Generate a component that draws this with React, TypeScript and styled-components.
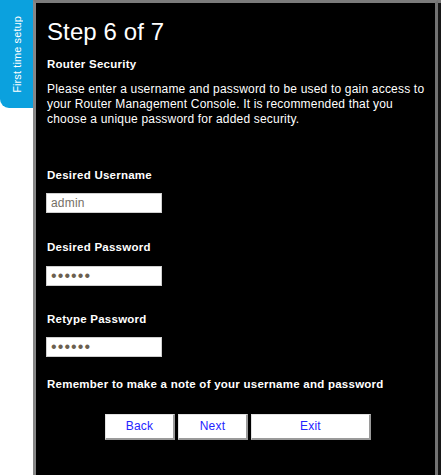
import React from "react";
import styled, { createGlobalStyle } from "styled-components";

const GlobalStyle = createGlobalStyle`
  html, body {
    margin: 0;
    padding: 0;
    background: #ffffff;
  }
  body {
    font-family: "Liberation Sans", Arial, sans-serif;
  }
`;

const Page = styled.div`
  display: flex;
  align-items: flex-start;
  width: 441px;
  height: 475px;
  overflow: hidden;
`;

const Tab = styled.div`
  flex: none;
  width: 33px;
  height: 108px;
  background: #0ba1de;
  border-bottom-left-radius: 9px;
  display: flex;
  align-items: center;
  justify-content: center;
`;

const TabLabel = styled.span`
  writing-mode: vertical-rl;
  transform: rotate(180deg);
  color: #ffffff;
  font-size: 11px;
  line-height: 13px;
  letter-spacing: 0.1px;
  white-space: nowrap;
  margin-left: 2px;
`;

const Panel = styled.div`
  flex: none;
  box-sizing: border-box;
  width: 405px;
  height: 475px;
  background: #000000;
  border-top: 3px solid #7b7b7b;
  border-left: 3px solid #868686;
  border-right: 3px solid #727272;
  padding: 15px 6px 0 11px;
  color: #ffffff;
  display: flex;
  flex-direction: column;
`;

const Edge = styled.div`
  flex: 1;
  align-self: stretch;
  background: #161616;
  border-top: 3px solid #7b7b7b;
`;

const Title = styled.h1`
  margin: 0;
  font-size: 24px;
  line-height: 28px;
  font-weight: normal;
  letter-spacing: 0.1px;
`;

const Heading = styled.div<{ $top: number }>`
  margin-top: ${(p) => p.$top}px;
  font-size: 11.5px;
  line-height: 14px;
  font-weight: bold;
  letter-spacing: 0.25px;
  white-space: nowrap;
`;

const Paragraph = styled.p`
  margin: 11px 0 0;
  font-size: 12px;
  line-height: 15px;
  letter-spacing: 0.19px;
`;

const Field = styled.input<{ $top: number; $secret?: boolean }>`
  box-sizing: border-box;
  display: block;
  margin: ${(p) => p.$top}px 0 0 -1px;
  width: 116px;
  height: 20px;
  padding: 0 4px;
  border: 1px solid #cfcfcf;
  border-radius: 0;
  background: #ffffff;
  color: ${(p) => (p.$secret ? "#6b604f" : "#756f66")};
  font-family: "Liberation Sans", Arial, sans-serif;
  font-size: ${(p) => (p.$secret ? "16px" : "12px")};
  letter-spacing: ${(p) => (p.$secret ? "1.1px" : "0.2px")};
  outline: none;
`;

const ButtonRow = styled.div`
  display: flex;
  justify-content: center;
  gap: 3px;
  margin-top: 23px;
`;

const Button = styled.button<{ $w: number }>`
  box-sizing: border-box;
  width: ${(p) => p.$w}px;
  height: 26px;
  padding: 0 0 1px;
  background: #ffffff;
  border-top: 1px solid #e2e2e2;
  border-left: 1px solid #e2e2e2;
  border-right: 2px solid #9a9a9a;
  border-bottom: 2px solid #9a9a9a;
  border-radius: 0;
  color: #2424ff;
  font-family: "Liberation Sans", Arial, sans-serif;
  font-size: 12px;
  letter-spacing: 0.2px;
  cursor: pointer;
`;

export default function App() {
  return (
    <>
      <GlobalStyle />
      <Page>
        <Tab>
          <TabLabel>First time setup</TabLabel>
        </Tab>
        <Panel>
          <Title>Step 6 of 7</Title>
          <Heading $top={11}>Router Security</Heading>
          <Paragraph>
            Please enter a username and password to be used to gain access to
            your Router Management Console. It is recommended that you choose a
            unique password for added security.
          </Paragraph>
          <Heading $top={41}>Desired Username</Heading>
          <Field $top={11} type="text" defaultValue="admin" readOnly />
          <Heading $top={27}>Desired Password</Heading>
          <Field $top={12} $secret type="password" defaultValue="aaaaaa" readOnly />
          <Heading $top={26}>Retype Password</Heading>
          <Field $top={11} $secret type="password" defaultValue="aaaaaa" readOnly />
          <Heading $top={20}>
            Remember to make a note of your username and password
          </Heading>
          <ButtonRow>
            <Button $w={70}>Back</Button>
            <Button $w={70}>Next</Button>
            <Button $w={120}>Exit</Button>
          </ButtonRow>
        </Panel>
        <Edge />
      </Page>
    </>
  );
}
